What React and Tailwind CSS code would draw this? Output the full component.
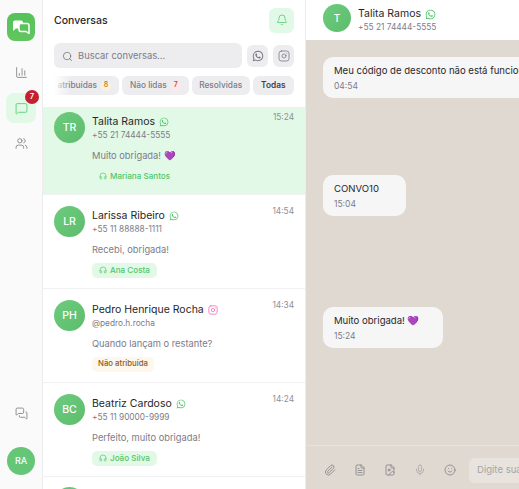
import { Bell, ChartColumn, FileText, FileImage, Headphones, Instagram, MessageSquare, MessagesSquare, Mic, Paperclip, Search, Smile, Users } from "lucide-react";
import { FaWhatsapp } from "react-icons/fa";

const conversations = [
  { id: 1, initials: "TR", name: "Talita Ramos", contact: "+55 21 74444-5555", time: "15:24", text: "Muito obrigada! 💜", agent: "Mariana Santos", channel: "wa", active: true },
  { id: 2, initials: "LR", name: "Larissa Ribeiro", contact: "+55 11 88888-1111", time: "14:54", text: "Recebi, obrigada!", agent: "Ana Costa", channel: "wa" },
  { id: 3, initials: "PH", name: "Pedro Henrique Rocha", contact: "@pedro.h.rocha", time: "14:34", text: "Quando lançam o restante?", channel: "ig" },
  { id: 4, initials: "BC", name: "Beatriz Cardoso", contact: "+55 11 90000-9999", time: "14:24", text: "Perfeito, muito obrigada!", agent: "João Silva", channel: "wa" },
];

const messages = [
  { id: 1, text: "Meu código de desconto não está funcionando, podem me ajudar?", time: "04:54", cls: "mt-[17px]" },
  { id: 2, text: "CONVO10", time: "15:04", cls: "mt-[77px] w-[83px]" },
  { id: 3, text: "Muito obrigada! 💜", time: "15:24", cls: "mt-[91px] w-[120px]" },
];

function ChannelIcon({ channel }) {
  if (channel === "ig") return <Instagram size={10} className="shrink-0 text-[#f472b6]" />;
  return <FaWhatsapp size={10} className="shrink-0 text-[#4fc76a]" />;
}

function ConversationRow({ c }) {
  return (
    <div className={`flex shrink-0 gap-[7px] border-b border-[#f1f1f3] px-[11px] ${c.active ? "h-[88px] bg-[#e3f9e7] pt-[5px]" : "h-[94px] bg-white pt-[11px]"}`}>
      <div className="flex h-[31px] w-[31px] shrink-0 items-center justify-center rounded-full bg-gradient-to-br from-[#6ccb7c] to-[#5dbd6d] text-[10.5px] font-medium text-white">
        {c.initials}
      </div>
      <div className="min-w-0 flex-1">
        <div className="flex items-start justify-between">
          <div className="mt-[2px] flex h-[16px] items-center gap-[4px] text-[10.5px] leading-none text-[#27272a]">
            {c.name}
            <ChannelIcon channel={c.channel} />
          </div>
          <span className="text-[8.3px] leading-[10px] text-[#8e8e99]">{c.time}</span>
        </div>
        <div className="text-[8.3px] leading-[10px] text-[#7c7c88]">{c.contact}</div>
        <div className="mt-[8.5px] text-[9.3px] leading-[13px] text-[#7c7c88]">{c.text}</div>
        {c.agent ? (
          <div className={`mt-[7px] flex h-[15px] w-fit items-center gap-[3px] rounded-[5px] px-[7px] text-[8.1px] font-medium text-[#4fc76a] ${c.active ? "" : "bg-[#e3f9e7]"}`}>
            <Headphones size={8} />
            {c.agent}
          </div>
        ) : (
          <div className="mt-[7px] flex h-[15px] w-fit items-center rounded-[5px] bg-[#fdf7ee] px-[6px] text-[7.8px] font-medium text-[#8a5a1c]">
            Não atribuída
          </div>
        )}
      </div>
    </div>
  );
}

export default function App() {
  return (
    <div className="flex h-[489px] w-[519px] overflow-hidden bg-white font-['Inter',sans-serif]">
      {/* Sidebar */}
      <div className="flex w-[43px] shrink-0 flex-col items-center border-r border-[#ececef] bg-[#fafafa] pb-[14px] pt-[13px]">
        <div className="flex h-[28px] w-[28px] items-center justify-center rounded-[8px] bg-gradient-to-b from-[#55c25a] to-[#62c65f]">
          <svg width="18" height="16" viewBox="0 0 18 16">
            <path d="M1 3.5Q1 1.5 3 1.5H9Q11 1.5 11 3.5V7.5Q11 9.5 9 9.5H4L1 12Z" fill="white" />
            <path d="M7 6.5Q7 4.5 9 4.5H15Q17 4.5 17 6.5V14.5L14 12.5H9Q7 12.5 7 10.5Z" fill="#5cc25c" stroke="white" strokeWidth="1.5" strokeLinejoin="round" />
          </svg>
        </div>
        <ChartColumn size={13} strokeWidth={1.4} className="mt-[25px] text-[#71717a]" />
        <div className="relative mt-[14px] flex h-[30px] w-[30px] items-center justify-center rounded-[8px] bg-[#e3f9e7]">
          <MessageSquare size={13} strokeWidth={1.5} className="text-[#4fc76a]" />
          <span className="absolute -right-[3px] -top-[3px] flex h-[14px] w-[14px] items-center justify-center rounded-full bg-[#c2212f] text-[7.5px] font-semibold text-white">7</span>
        </div>
        <Users size={13} strokeWidth={1.4} className="mt-[14px] text-[#71717a]" />
        <div className="flex-1" />
        <MessagesSquare size={13} strokeWidth={1.4} className="text-[#71717a]" />
        <div className="mt-[27px] flex h-[28px] w-[28px] items-center justify-center rounded-full bg-[#66c677] text-[9px] font-medium text-white">RA</div>
      </div>

      {/* Conversation list */}
      <div className="flex w-[263px] shrink-0 flex-col border-r border-[#ececef]">
        <div className="flex h-[43px] shrink-0 items-center justify-between pb-[3px] pl-[11px] pr-[11px]">
          <span className="mt-[1px] text-[10.5px] font-medium text-[#27272a]">Conversas</span>
          <div className="flex h-[25px] w-[25px] items-center justify-center rounded-[6px] bg-[#e3f9e7]">
            <Bell size={12} strokeWidth={1.5} className="text-[#4fc76a]" />
          </div>
        </div>
        <div className="flex h-[25px] shrink-0 items-center gap-[5px] px-[11px]">
          <div className="flex h-[25px] flex-1 items-center gap-[5px] rounded-[6px] bg-[#ededf0] pl-[8px] pt-[1px] text-[9.4px] text-[#7c7c88]">
            <Search size={11} strokeWidth={1.5} className="text-[#63636b]" />
            Buscar conversas...
          </div>
          <div className="flex h-[22px] w-[21px] items-center justify-center rounded-[6px] bg-[#ededf0] text-[#71717a]"><FaWhatsapp size={12} /></div>
          <div className="flex h-[22px] w-[21px] items-center justify-center rounded-[6px] bg-[#ededf0] text-[#71717a]"><Instagram size={12} strokeWidth={1.5} /></div>
        </div>
        <div className="relative mx-[11px] mt-[8px] flex h-[19px] shrink-0 justify-end gap-[3px] overflow-hidden text-[8.3px] font-medium text-[#7c7c88]">
          <div className="flex shrink-0 items-center gap-[4px] rounded-[6px] bg-[#ededf0] px-[8px]">Não atribuídas <span className="flex h-[10px] w-[10px] items-center justify-center rounded-full bg-[#fdf1df] text-[7px] text-[#b7791f]">8</span></div>
          <div className="flex shrink-0 items-center gap-[4px] rounded-[6px] bg-[#ededf0] px-[8px]">Não lidas <span className="flex h-[10px] w-[10px] items-center justify-center rounded-full bg-[#fde8ea] text-[7px] text-[#dc2f3f]">7</span></div>
          <div className="flex shrink-0 items-center rounded-[6px] bg-[#ededf0] px-[7.5px]">Resolvidas</div>
          <div className="flex shrink-0 items-center rounded-[6px] bg-[#ededf0] px-[8.5px] font-semibold text-[#3f3f46]">Todas</div>
          <div className="absolute inset-y-0 left-0 w-[16px] bg-gradient-to-r from-white to-transparent" />
        </div>
        <div className="mt-[12px] flex flex-1 flex-col overflow-hidden">
          {conversations.map((c) => <ConversationRow key={c.id} c={c} />)}
          <div className="shrink-0 pl-[11px] pt-[10px]">
            <div className="h-[31px] w-[31px] rounded-full bg-[#66c677]" />
          </div>
        </div>
      </div>

      {/* Chat */}
      <div className="flex min-w-0 flex-1 flex-col overflow-hidden bg-[#e0d9d1]">
        <div className="flex h-[40px] shrink-0 items-start gap-[7px] bg-white pl-[17px] pt-[4px]">
          <div className="flex h-[28px] w-[28px] items-center justify-center rounded-full bg-gradient-to-br from-[#6ccb7c] to-[#5dbd6d] text-[10px] font-medium text-white">T</div>
          <div className="mt-[3px]">
            <div className="flex items-center gap-[4px] text-[10.5px] leading-[14px] text-[#27272a]">Talita Ramos <FaWhatsapp size={11} className="text-[#4fc76a]" /></div>
            <div className="text-[8.3px] leading-[12px] text-[#7c7c88]">+55 21 74444-5555</div>
          </div>
        </div>
        <div className="flex flex-1 flex-col items-start pl-[17px]">
          {messages.map((m) => (
            <div key={m.id} className={`${m.cls} h-[41px] shrink-0 whitespace-nowrap rounded-[10px] bg-[#f6f6f7] px-[11px] pt-[7px]`}>
              <div className="text-[9.55px] leading-[14px] text-[#27272a]">{m.text}</div>
              <div className="mt-[2px] text-[8.5px] leading-[13px] text-[#7c7c88]">{m.time}</div>
            </div>
          ))}
        </div>
        <div className="flex h-[44px] shrink-0 items-center border-t border-[#e8e2db] pl-[18px] pt-[5px] text-[#7c7c80]">
          <Paperclip size={12} strokeWidth={1.5} className="shrink-0" />
          <FileText size={12} strokeWidth={1.5} className="ml-[18px] shrink-0" />
          <FileImage size={12} strokeWidth={1.5} className="ml-[18px] shrink-0" />
          <Mic size={12} strokeWidth={1.5} className="ml-[18px] shrink-0 text-[#a3a3a3]" />
          <Smile size={12} strokeWidth={1.5} className="ml-[18px] shrink-0" />
          <div className="ml-[13px] flex h-[25px] w-[120px] shrink-0 items-center rounded-[6px] bg-[#e8e3dd] pl-[8px] text-[9.55px] text-[#a5a5a8]">Digite sua mensagem</div>
        </div>
      </div>
    </div>
  );
}
